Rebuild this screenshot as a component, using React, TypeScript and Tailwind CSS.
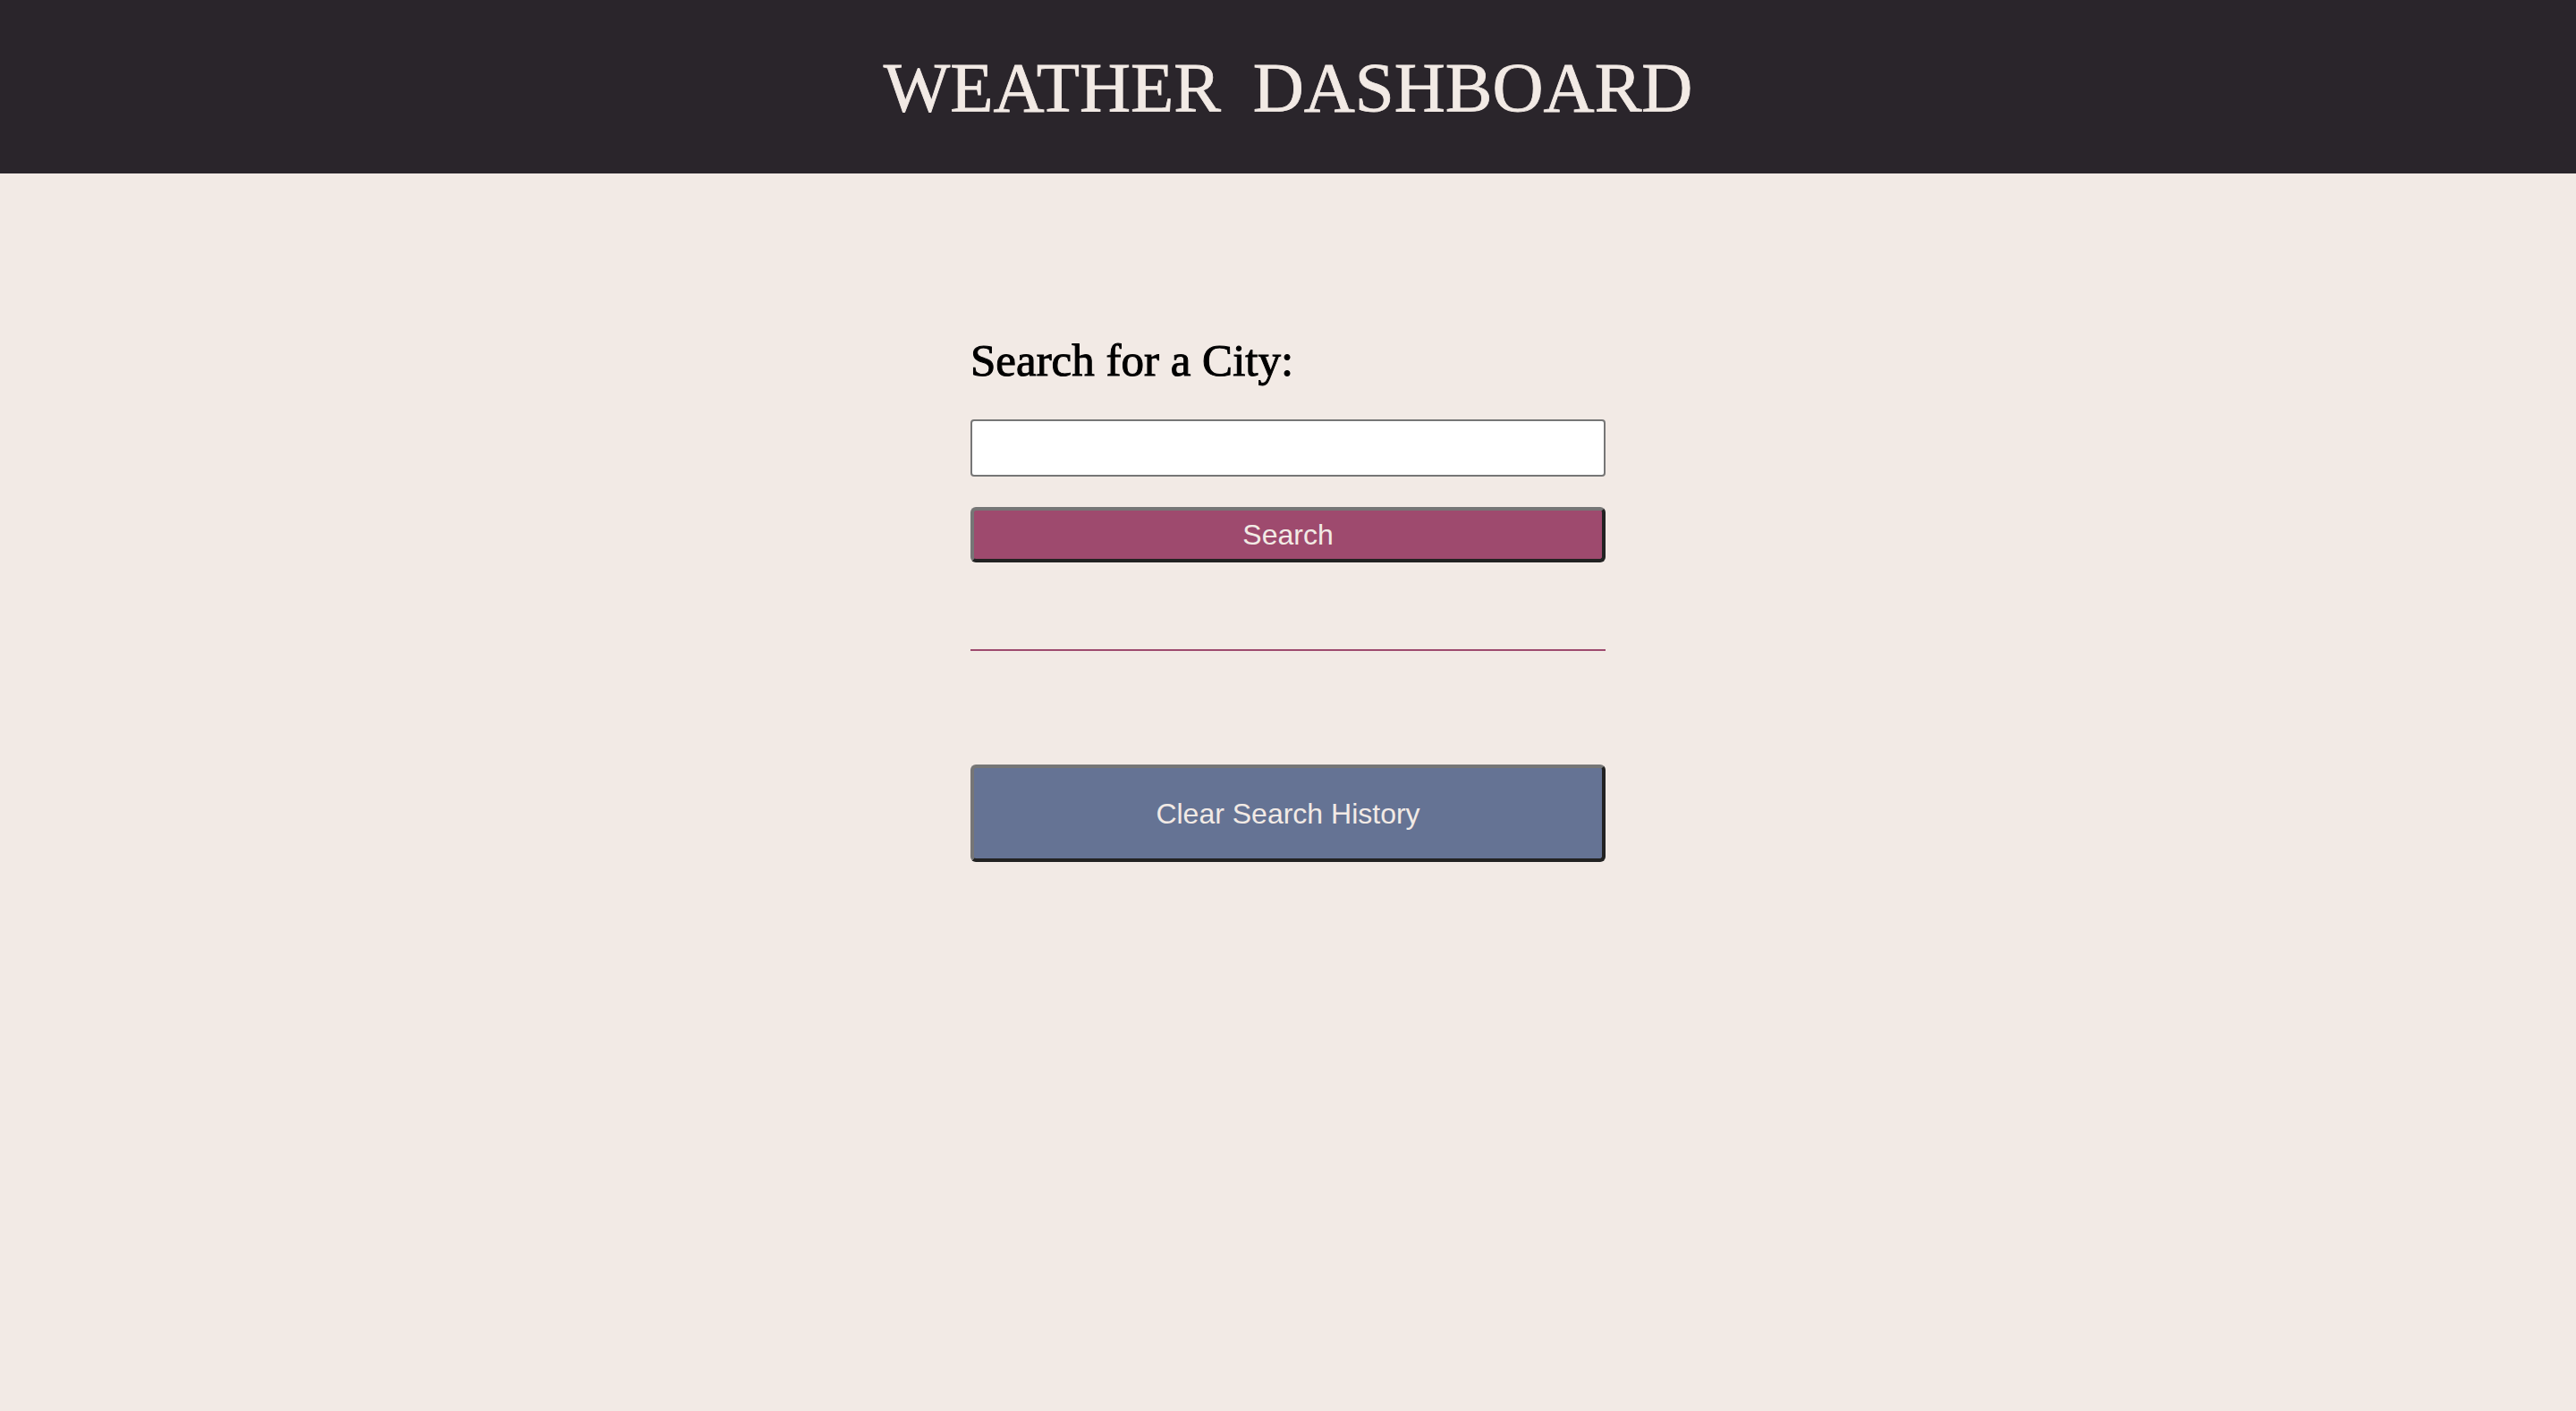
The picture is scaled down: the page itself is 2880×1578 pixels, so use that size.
import React, { FC, useState } from 'react';

const App: FC = () => {
  const [city, setCity] = useState('');

  return (
    <div className="min-h-[1578px] bg-[#f2eae5] font-['Liberation_Sans',Arial,sans-serif]">
      <header className="flex h-[194px] items-center justify-center bg-[#2a252b]">
        <h1 className="font-['Liberation_Serif','Times_New_Roman',serif] text-[79px] leading-none font-normal uppercase text-[#f2eae5] [word-spacing:16px] [-webkit-text-stroke:0.8px_#f2eae5]">
          Weather Dashboard
        </h1>
      </header>

      <main className="mx-auto flex w-[710px] flex-col pt-[184px]">
        <h2 className="font-['Liberation_Serif','Times_New_Roman',serif] text-[51px] leading-none text-black [-webkit-text-stroke:1px_#000]">
          Search for a City:
        </h2>
        <input
          type="text"
          value={city}
          onChange={(e) => setCity(e.target.value)}
          className="mt-[40px] h-[64px] w-full rounded-[4px] border-2 border-[#767676] bg-white px-3 text-[28px] outline-none"
        />
        <button
          className="mt-[34px] h-[62px] w-full rounded-[6px] border-4 border-t-[#767676] border-l-[#767676] border-r-[#222] border-b-[#222] bg-[#9e4a6e] text-[32px] leading-none text-[#f2eae5]"
        >
          Search
        </button>

        <hr className="mt-[97px] border-0 border-t-2 border-[#9e4a6e]" />

        <ul className="h-[127px]" />

        <button className="h-[109px] w-full rounded-[6px] border-4 border-t-[#767676] border-l-[#767676] border-r-[#222] border-b-[#222] bg-[#657394] text-[32px] leading-none text-[#f2eae5]">
          Clear Search History
        </button>
      </main>
    </div>
  );
};

export default App;
